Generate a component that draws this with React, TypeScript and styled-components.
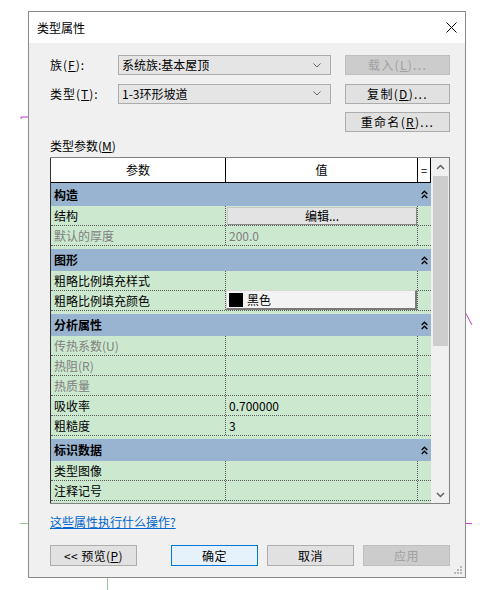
import React from "react";
import styled, { createGlobalStyle, css } from "styled-components";

const GlobalStyle = createGlobalStyle`
  html, body { margin: 0; padding: 0; background: #fff; }
  body {
    font-family: "Noto Sans CJK SC", "Noto Sans", sans-serif;
    font-size: 12px;
    color: #000;
  }
  * { box-sizing: border-box; }
`;

type Row =
  | { kind: "group"; label: string }
  | { kind: "data"; label: string; value?: string; muted?: boolean; control?: "edit" | "color" };

const rows: Row[] = [
  { kind: "group", label: "构造" },
  { kind: "data", label: "结构", control: "edit" },
  { kind: "data", label: "默认的厚度", value: "200.0", muted: true },
  { kind: "group", label: "图形" },
  { kind: "data", label: "粗略比例填充样式" },
  { kind: "data", label: "粗略比例填充颜色", control: "color" },
  { kind: "group", label: "分析属性" },
  { kind: "data", label: "传热系数(U)", muted: true },
  { kind: "data", label: "热阻(R)", muted: true },
  { kind: "data", label: "热质量", muted: true },
  { kind: "data", label: "吸收率", value: "0.700000" },
  { kind: "data", label: "粗糙度", value: "3" },
  { kind: "group", label: "标识数据" },
  { kind: "data", label: "类型图像" },
  { kind: "data", label: "注释记号" },
];

const Chevron = () => (
  <svg width="8" height="5" viewBox="0 0 8 5">
    <path d="M0.5 0.5 L4 4 L7.5 0.5" fill="none" stroke="#666" strokeWidth="1" />
  </svg>
);

const DoubleUp = () => (
  <svg width="7" height="9" viewBox="0 0 7 9">
    <path d="M0.7 4 L3.5 1.2 L6.3 4 M0.7 8 L3.5 5.2 L6.3 8" fill="none" stroke="#000" strokeWidth="1.3" />
  </svg>
);

const ScrollArrow: React.FC<{ down?: boolean }> = ({ down }) => (
  <svg width="9" height="6" viewBox="0 0 9 6">
    <path
      d={down ? "M1 1 L4.5 4.5 L8 1" : "M1 5 L4.5 1.5 L8 5"}
      fill="none"
      stroke="#606060"
      strokeWidth="1.5"
    />
  </svg>
);

export default function App() {
  return (
    <Page>
      <GlobalStyle />
      <Canvas width="494" height="590" viewBox="0 0 494 590">
        <path d="M21 119 L21 117 L28 117" stroke="#c43cc4" fill="none" />
        <path d="M465 312 L472 325" stroke="#c43cc4" />
        <path d="M20 523.5 L28 523.5" stroke="#9cc49c" />
        <path d="M466 523.5 L472 523.5" stroke="#c43cc4" />
        <path d="M107.5 577 L107.5 590" stroke="#9cc49c" />
      </Canvas>
      <Dialog>
        <TitleBar>
          <span>类型属性</span>
          <svg width="11" height="11" viewBox="0 0 11 11">
            <path d="M0.5 0.5 L10.5 10.5 M10.5 0.5 L0.5 10.5" stroke="#000" strokeWidth="1" />
          </svg>
        </TitleBar>
        <Body>
          <TopGrid>
            <FieldLabel>族(<u>F</u>):</FieldLabel>
            <Select>
              <span>系统族:基本屋顶</span>
              <Chevron />
            </Select>
            <Button $variant="disabled" $wide>载入(<u>L</u>)...</Button>
            <FieldLabel>类型(<u>T</u>):</FieldLabel>
            <Select>
              <span>1-3环形坡道</span>
              <Chevron />
            </Select>
            <Button $wide>复制(<u>D</u>)...</Button>
            <span />
            <span />
            <Button $wide>重命名(<u>R</u>)...</Button>
          </TopGrid>
          <SectionLabel>类型参数(<u>M</u>)</SectionLabel>
          <Table>
            <Grid>
              <HeaderRow>
                <HeaderCell>参数</HeaderCell>
                <HeaderCell>值</HeaderCell>
                <HeaderCell $small>=</HeaderCell>
              </HeaderRow>
              <Rows>
                {rows.map((r, i) =>
                  r.kind === "group" ? (
                    <GroupRow key={i}>
                      <span>{r.label}</span>
                      <GroupToggle>
                        <DoubleUp />
                      </GroupToggle>
                    </GroupRow>
                  ) : (
                    <DataRow key={i}>
                      <Cell $muted={r.muted}>{r.label}</Cell>
                      <Cell $muted={r.muted}>
                        {r.control === "edit" && <EditButton>编辑...</EditButton>}
                        {r.control === "color" && (
                          <ColorButton>
                            <Swatch />
                            黑色
                          </ColorButton>
                        )}
                        {r.value}
                      </Cell>
                      <Cell $last />
                    </DataRow>
                  )
                )}
              </Rows>
            </Grid>
            <ScrollBar>
              <ScrollButton>
                <ScrollArrow />
              </ScrollButton>
              <Thumb />
              <ScrollSpacer />
              <ScrollButton>
                <ScrollArrow down />
              </ScrollButton>
            </ScrollBar>
          </Table>
          <HelpLink>这些属性执行什么操作?</HelpLink>
          <Footer>
            <Button>&lt;&lt; 预览(<u>P</u>)</Button>
            <FooterRight>
              <Button $variant="primary">确定</Button>
              <Button>取消</Button>
              <Button $variant="disabled">应用</Button>
            </FooterRight>
          </Footer>
        </Body>
        <Grip width="8" height="8" viewBox="0 0 8 8">
          <rect x="6" y="0" width="2" height="2" fill="#b8b8b8" />
          <rect x="3" y="3" width="2" height="2" fill="#b8b8b8" />
          <rect x="6" y="3" width="2" height="2" fill="#b8b8b8" />
          <rect x="0" y="6" width="2" height="2" fill="#b8b8b8" />
          <rect x="3" y="6" width="2" height="2" fill="#b8b8b8" />
          <rect x="6" y="6" width="2" height="2" fill="#b8b8b8" />
        </Grip>
      </Dialog>
    </Page>
  );
}

const Page = styled.div`
  position: relative;
  width: 494px;
  height: 590px;
  padding: 11px 0 0 28px;
  overflow: hidden;
`;

const Canvas = styled.svg`
  position: absolute;
  left: 0;
  top: 0;
  pointer-events: none;
`;

const Dialog = styled.div`
  position: relative;
  z-index: 1;
  width: 438px;
  height: 567px;
  border: 1px solid #8a8a8a;
  background: #f0f0f0;
  display: flex;
  flex-direction: column;
`;

const TitleBar = styled.div`
  height: 31px;
  background: #fff;
  display: flex;
  align-items: center;
  justify-content: space-between;
  padding: 0 8px 0 8px;
  font-size: 12px;
  line-height: 16px;
`;

const Body = styled.div`
  flex: 1;
  display: flex;
  flex-direction: column;
  padding: 12px 15px 0 21px;
`;

const TopGrid = styled.div`
  display: grid;
  grid-template-columns: 68px 213px 1fr;
  grid-auto-rows: 20px;
  row-gap: 8.5px;
  align-items: center;
`;

const FieldLabel = styled.span`
  font-size: 12px;
  line-height: 16px;
  letter-spacing: 1px;
`;

const Select = styled.div`
  height: 20px;
  border: 1px solid #acacac;
  background: #e5e5e5;
  display: flex;
  align-items: center;
  justify-content: space-between;
  padding: 0 9px 0 3px;
  font-size: 12px;
  line-height: 16px;
`;

const buttonVariants = {
  normal: css`
    background: #e1e1e1;
    border: 1px solid #adadad;
    color: #000;
  `,
  primary: css`
    background: #e5f1fb;
    border: 1px solid #0078d7;
    color: #000;
  `,
  disabled: css`
    background: #cccccc;
    border: 1px solid #bfbfbf;
    color: #a0a0a0;
  `,
};

const Button = styled.div<{ $variant?: keyof typeof buttonVariants; $wide?: boolean }>`
  width: ${(p) => (p.$wide ? "105px" : "87px")};
  height: ${(p) => (p.$wide ? "20px" : "21px")};
  justify-self: end;
  display: flex;
  align-items: center;
  justify-content: center;
  font-size: 12px;
  line-height: 16px;
  letter-spacing: ${(p) => (p.$wide ? "1.3px" : "0.4px")};
  ${(p) => buttonVariants[p.$variant ?? "normal"]}
`;

const SectionLabel = styled.div`
  margin-top: 6px;
  font-size: 12px;
  line-height: 16px;
`;

const Table = styled.div`
  margin-top: 3px;
  width: 400px;
  height: 347px;
  border: 1px solid #828282;
  display: flex;
  background: #f0f0f0;
`;

const Grid = styled.div`
  display: flex;
  flex-direction: column;
  overflow: hidden;
  border-left: 1px solid #333;
  margin-left: -1px;
  width: 381px;
`;

const HeaderRow = styled.div`
  display: grid;
  grid-template-columns: 175px 192px 13px;
  height: 25px;
  background: #fff;
  border-bottom: 1px solid #000;
  flex-shrink: 0;
`;

const HeaderCell = styled.div<{ $small?: boolean }>`
  border-right: 1px solid #000;
  display: flex;
  align-items: center;
  justify-content: center;
  font-size: ${(p) => (p.$small ? "11px" : "12px")};
  line-height: 16px;
`;

const Rows = styled.div`
  flex: 1;
  background: #cce8cf;
`;

const GroupRow = styled.div`
  height: 22px;
  margin-top: 3px;
  background: #99b4d1;
  display: flex;
  align-items: center;
  justify-content: space-between;
  padding-left: 3px;
  font-weight: bold;
  font-size: 12px;
  line-height: 16px;

  &:first-child {
    margin-top: 0;
    height: 23px;
  }
`;

const GroupToggle = styled.div`
  width: 13px;
  display: flex;
  justify-content: center;
`;

const DataRow = styled.div`
  display: grid;
  grid-template-columns: 175px 192px 13px;
  height: 20px;
  border-bottom: 1px dotted #5a5a5a;
`;

const Cell = styled.div<{ $muted?: boolean; $last?: boolean }>`
  position: relative;
  display: flex;
  align-items: center;
  padding-left: 3px;
  font-size: 12px;
  line-height: 16px;
  color: ${(p) => (p.$muted ? "#808080" : "#000")};
  border-right: ${(p) => (p.$last ? "none" : "1px dotted #5a5a5a")};
`;

const EditButton = styled.div`
  position: absolute;
  left: 1px;
  right: 0;
  top: 1px;
  bottom: 0;
  background: #e3e3e3;
  border: 1px solid #c8c8c8;
  border-right-color: #8a8a8a;
  border-bottom-color: #8a8a8a;
  display: flex;
  align-items: center;
  justify-content: center;
  color: #000;
`;

const ColorButton = styled.div`
  position: absolute;
  left: 0;
  right: 0;
  top: -1px;
  bottom: 0;
  background: #f3f3f3;
  border: 1px solid #d8d8d8;
  border-right: 2px solid #7a7a7a;
  border-bottom: 2px solid #7a7a7a;
  display: flex;
  align-items: center;
  gap: 4px;
  padding-left: 2px;
  color: #000;
`;

const Swatch = styled.span`
  width: 14px;
  height: 14px;
  background: #000;
`;

const ScrollBar = styled.div`
  width: 18px;
  display: flex;
  flex-direction: column;
  background: #f0f0f0;
`;

const ScrollButton = styled.div`
  height: 17px;
  display: flex;
  align-items: center;
  justify-content: center;
`;

const Thumb = styled.div`
  margin: 1px 1px 0 2px;
  height: 170px;
  background: #cdcdcd;
`;

const ScrollSpacer = styled.div`
  flex: 1;
`;

const HelpLink = styled.a`
  margin-top: 10px;
  align-self: flex-start;
  font-size: 12px;
  line-height: 16px;
  color: #0066cc;
  text-decoration: underline;
  cursor: pointer;
`;

const Footer = styled.div`
  margin-top: 15px;
  display: flex;
  justify-content: space-between;
`;

const FooterRight = styled.div`
  display: flex;
  gap: 9px;
`;

const Grip = styled.svg`
  position: absolute;
  right: 3px;
  bottom: 3px;
`;
